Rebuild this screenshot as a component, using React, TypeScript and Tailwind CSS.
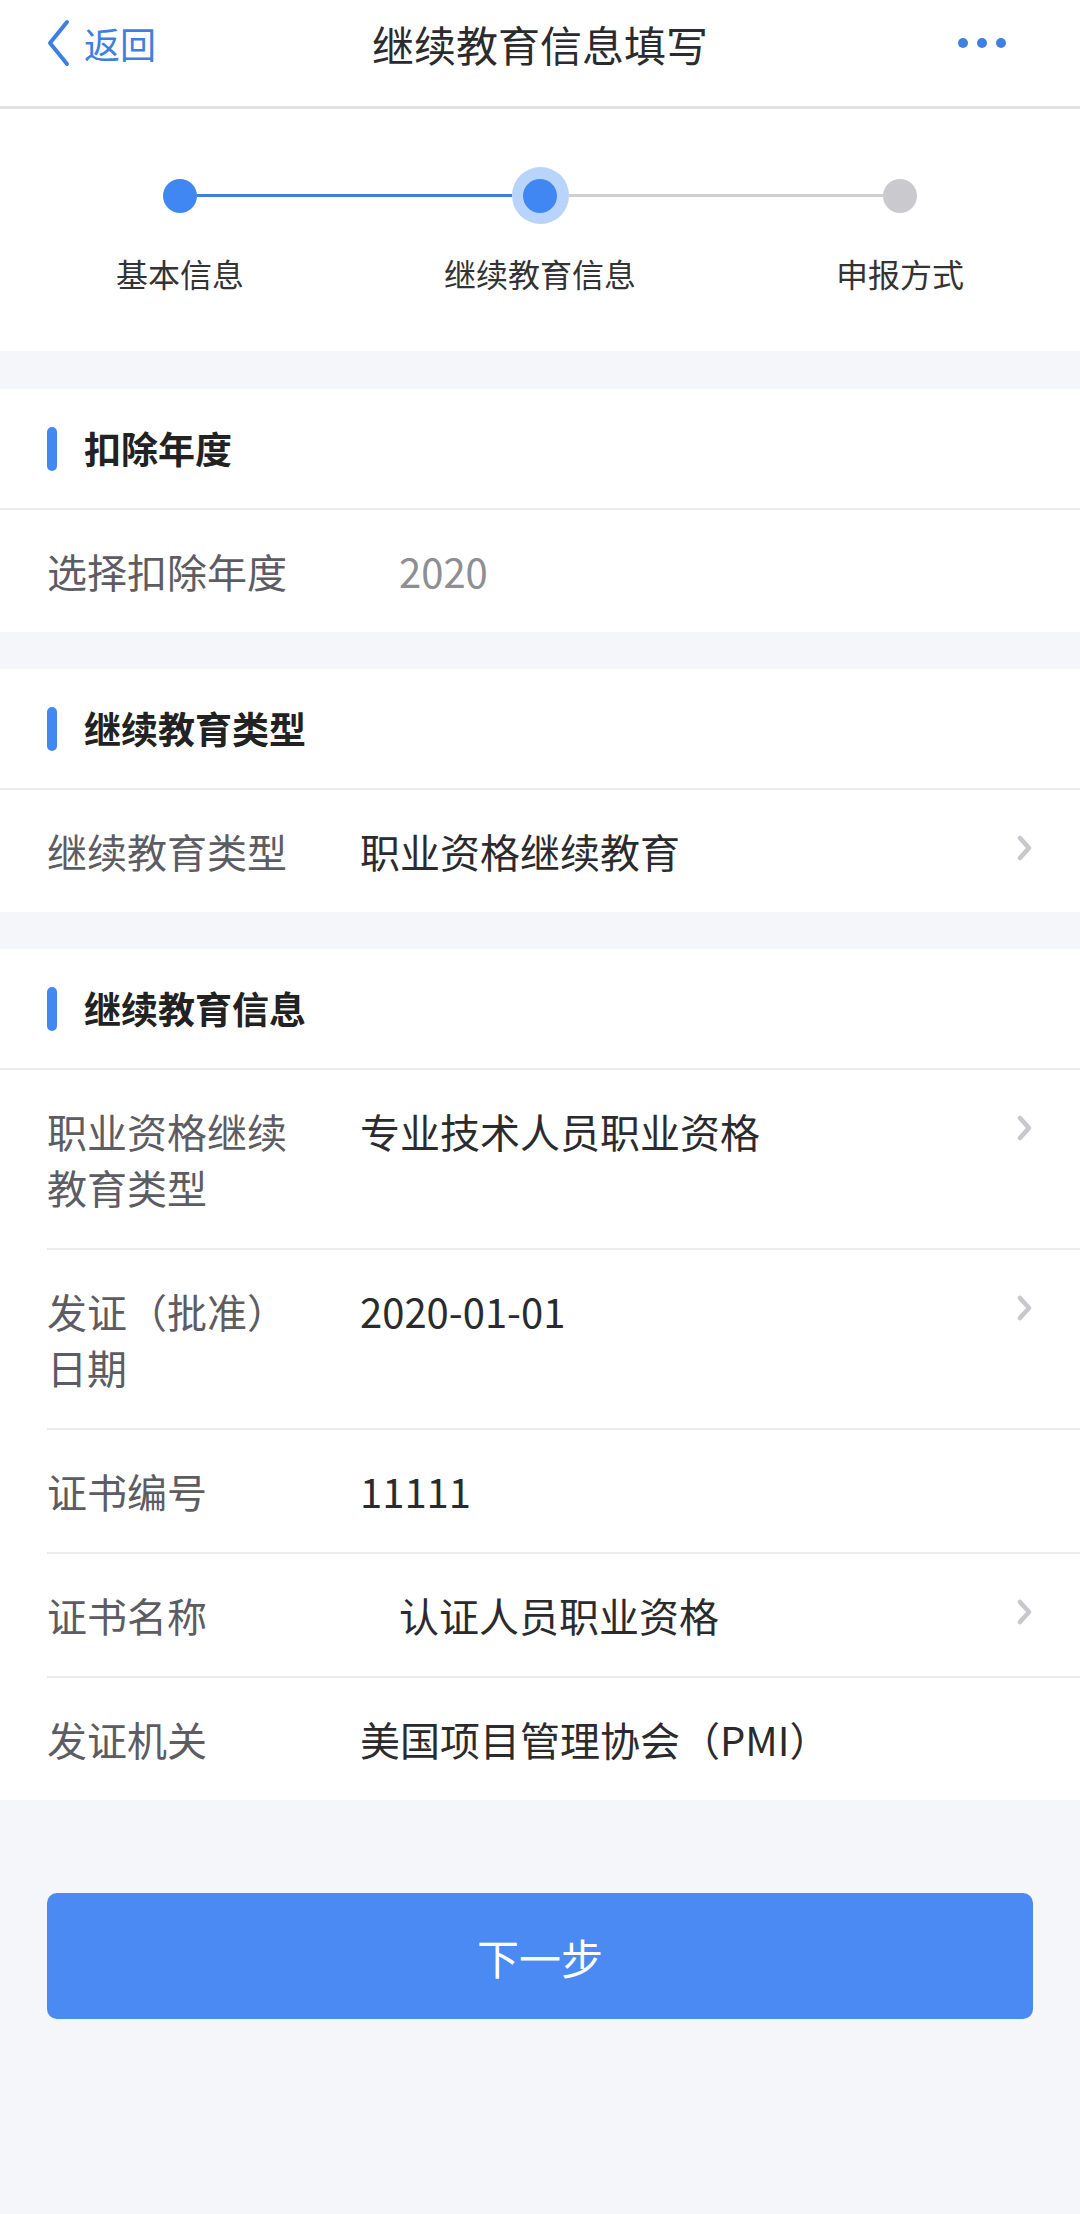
import React from 'react';

const font = { fontFamily: '"Noto Sans CJK SC", "Noto Sans", sans-serif' };

type Row = { label: string; value: string; arrow?: boolean; indent?: boolean; muted?: boolean };

const Chevron = () => (
  <svg width="18" height="26" viewBox="0 0 18 26" className="shrink-0 mt-[12px]">
    <path d="M4 3 L13 13 L4 23" fill="none" stroke="#c7c7cc" strokeWidth="4.5" strokeLinecap="round" strokeLinejoin="round" />
  </svg>
);

const SectionTitle = ({ title }: { title: string }) => (
  <div className="h-[121px] flex items-center gap-[27px] px-[47px] border-b-2 border-[#ececee]">
    <div className="w-[10px] h-[44px] rounded-full bg-[#4287f2]" />
    <span className="text-[37px] font-bold text-[#222]">{title}</span>
  </div>
);

const FormRow = ({ row, last }: { row: Row; last?: boolean }) => (
  <div className="pl-[47px]">
    <div className={`flex gap-[53px] py-[33px] pr-[46px] ${last ? '' : 'border-b-2 border-[#ececee]'}`}>
      <div className="w-[260px] shrink-0 text-[40px] leading-[56px] text-[#5c5c62]">{row.label}</div>
      <div
        className={`flex-1 text-[40px] leading-[56px] ${row.muted ? 'text-[#8e8e93]' : 'text-[#2b2b2e]'} ${
          row.indent ? 'pl-[39px]' : ''
        }`}
      >
        {row.value}
      </div>
      {row.arrow && <Chevron />}
    </div>
  </div>
);

const Section = ({ title, rows }: { title: string; rows: Row[] }) => (
  <div className="bg-white">
    <SectionTitle title={title} />
    {rows.map((r, i) => (
      <FormRow key={i} row={r} last={i === rows.length - 1} />
    ))}
  </div>
);

const Step = ({
  label,
  left,
  right,
  state,
}: {
  label: string;
  left: string;
  right: string;
  state: 'done' | 'current' | 'todo';
}) => (
  <div className="flex flex-col items-center">
    <div className="w-full h-[57px] flex items-center">
      <div className={`flex-1 h-[3px] ${left}`} />
      {state === 'current' ? (
        <div className="w-[57px] h-[57px] rounded-full bg-[#b9d4fa] flex items-center justify-center">
          <div className="w-[34px] h-[34px] rounded-full bg-[#4087f3]" />
        </div>
      ) : (
        <div className={`w-[34px] h-[34px] rounded-full ${state === 'done' ? 'bg-[#4087f3]' : 'bg-[#cacace]'}`} />
      )}
      <div className={`flex-1 h-[3px] ${right}`} />
    </div>
    <div className="mt-[29px] text-[32px] leading-[40px] text-[#333]">{label}</div>
  </div>
);

export default function App() {
  return (
    <div className="w-[1080px] min-h-[2214px] bg-[#f4f6f9]" style={font}>
      {/* Nav bar */}
      <div className="h-[109px] pb-[20px] bg-white border-b-[3px] border-[#e3e3e6] grid grid-cols-[1fr_auto_1fr] items-center">
        <div className="flex items-center gap-[13px] pl-[45px] text-[#3e7fe0]">
          <svg width="26" height="48" viewBox="0 0 26 48">
            <path d="M22 3 L5 24 L22 45" fill="none" stroke="#3e7fe0" strokeWidth="4" strokeLinecap="round" strokeLinejoin="round" />
          </svg>
          <span className="text-[36px]">返回</span>
        </div>
        <div className="text-[42px] text-[#2b2b2e]">继续教育信息填写</div>
        <div className="flex justify-end gap-[9px] pr-[74px]">
          <span className="w-[10px] h-[10px] rounded-full bg-[#3e80e3]" />
          <span className="w-[10px] h-[10px] rounded-full bg-[#3e80e3]" />
          <span className="w-[10px] h-[10px] rounded-full bg-[#3e80e3]" />
        </div>
      </div>

      {/* Steps */}
      <div className="bg-white h-[242px] pt-[58px] grid grid-cols-3">
        <Step label="基本信息" left="bg-transparent" right="bg-[#3d7fe0]" state="done" />
        <Step label="继续教育信息" left="bg-[#3d7fe0]" right="bg-[#d0d0d4]" state="current" />
        <Step label="申报方式" left="bg-[#d0d0d4]" right="bg-transparent" state="todo" />
      </div>

      <div className="flex flex-col gap-[37px] pt-[38px]">
        <Section title="扣除年度" rows={[{ label: '选择扣除年度', value: '2020', indent: true, muted: true }]} />
        <Section title="继续教育类型" rows={[{ label: '继续教育类型', value: '职业资格继续教育', arrow: true }]} />
        <Section
          title="继续教育信息"
          rows={[
            { label: '职业资格继续教育类型', value: '专业技术人员职业资格', arrow: true },
            { label: '发证（批准）日期', value: '2020-01-01', arrow: true },
            { label: '证书编号', value: '11111' },
            { label: '证书名称', value: '认证人员职业资格', arrow: true, indent: true },
            { label: '发证机关', value: '美国项目管理协会（PMI）' },
          ]}
        />
      </div>

      <div className="px-[47px] pt-[93px]">
        <button className="w-full h-[126px] rounded-[10px] bg-[#4a8af2] text-white text-[42px]">下一步</button>
      </div>
    </div>
  );
}
